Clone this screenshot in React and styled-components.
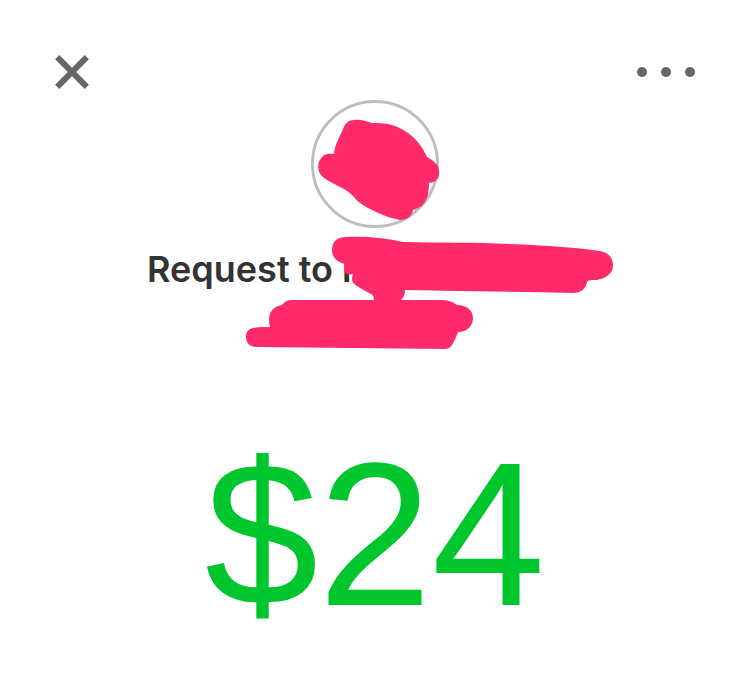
import styled, { createGlobalStyle } from 'styled-components';


const GlobalStyle = createGlobalStyle`
  body {
    margin: 0;
    background-color: #fff;
    font-family: Inter, "Liberation Sans", sans-serif;
  }
`;

function CloseIcon(){
  return <svg width="34" height="34" viewBox="0 0 34 34" fill="none" stroke="#666" strokeWidth="6" aria-hidden="true">
    <path d="M2.2 2.2 31.8 31.8M31.8 2.2 2.2 31.8" />
  </svg>
}

function MoreIcon(){
  return <svg width="58" height="34" viewBox="0 0 58 34" fill="#666" aria-hidden="true">
    <circle cx="5" cy="17" r="5" />
    <circle cx="29" cy="17" r="5" />
    <circle cx="53" cy="17" r="5" />
  </svg>
}

function Scribble(){
  return <Marker viewBox="147 100 456 250" aria-hidden="true">
    <path d="M334 154C335 143 340 137 343 129C345 123 349 120 354 120C361 119 365 121 372 123C378 123 382 123 388 124C398 126 406 131 413 137C420 144 424 150 427 157C434 161 439 165 439 171C440 178 437 182 429 183C429 190 428 196 426 200C423 206 419 208 413 210C412 216 407 220 400 220C389 218 378 213 368 208C361 204 357 201 354 197C348 189 334 185 324 178C316 172 317 161 323 156C327 153 330 154 334 154Z" />
    <path d="M345 264C337 262 332 257 332 250C332 242 337 237 346 237C367 236 386 238 403 242C439 243 475 242 510 244C541 245 571 247 600 251C608 252 613 258 613 265C613 273 607 278 597 280C592 280 588 280 587 282C586 289 580 293 574 293C518 292 461 291 405 290C405 294 404 297 401 300L438 300C447 300 452 301 457 305C466 305 473 310 473 318C473 326 467 332 458 332C456 337 455 340 453 343C451 347 449 349 444 349C382 348 319 348 257 347C250 347 246 343 246 337C246 331 249 329 253 328C258 327 264 327 270 327C267 315 271 307 282 305C285 301 288 300 293 300C320 300 347 300 374 300C374 297 374 296 371 294C366 291 361 289 357 286C352 283 351 280 353 274C349 275 345 274 344 271C343 268 347 268 344 267C344 266 344 265 345 264Z" />
  </Marker>
}

export default function App(){
  return <>
    <GlobalStyle />
    <Screen>
      <TopBar>
        <IconButton type="button" aria-label="Close"><CloseIcon /></IconButton>
        <IconButton type="button" aria-label="More options"><MoreIcon /></IconButton>
      </TopBar>
      <Recipient>
        <Avatar />
        <Title>Request to r</Title>
        <Scribble />
      </Recipient>
      <Amount>$24</Amount>
    </Screen>
  </>
}

const Screen = styled.main`
  display: flex;
  flex-direction: column;
  align-items: center;
`;

const TopBar = styled.header`
  box-sizing: border-box;
  width: 100%;
  padding: 55px 55px 11px;
  display: flex;
  justify-content: space-between;
  align-items: center;
`;

const IconButton = styled.button`
  display: flex;
  padding: 0;
  border: 0;
  background: none;
  cursor: pointer;
`;

const Recipient = styled.section`
  position: relative;
  width: 100%;
  max-width: 456px;
  padding-bottom: 57px;
  display: flex;
  flex-direction: column;
  align-items: center;
`;

const Avatar = styled.div`
  box-sizing: border-box;
  width: 128px;
  height: 128px;
  border: 3px solid #bebebe;
  border-radius: 50%;
`;

const Title = styled.h1`
  margin: 17px 0 0;
  width: 100%;
  font-size: 36px;
  line-height: 48px;
  font-weight: 600;
  color: #333;
`;

const Marker = styled.svg`
  position: absolute;
  top: 0;
  left: 0;
  width: 100%;
  height: 100%;
  overflow: visible;
  fill: #ff2a68;
  pointer-events: none;
`;

const Amount = styled.p`
  margin: 80px 0 0;
  font-family: "Liberation Sans", Arial, sans-serif;
  font-size: 204px;
  line-height: 208px;
  font-weight: 400;
  color: #00c62e;
`;
